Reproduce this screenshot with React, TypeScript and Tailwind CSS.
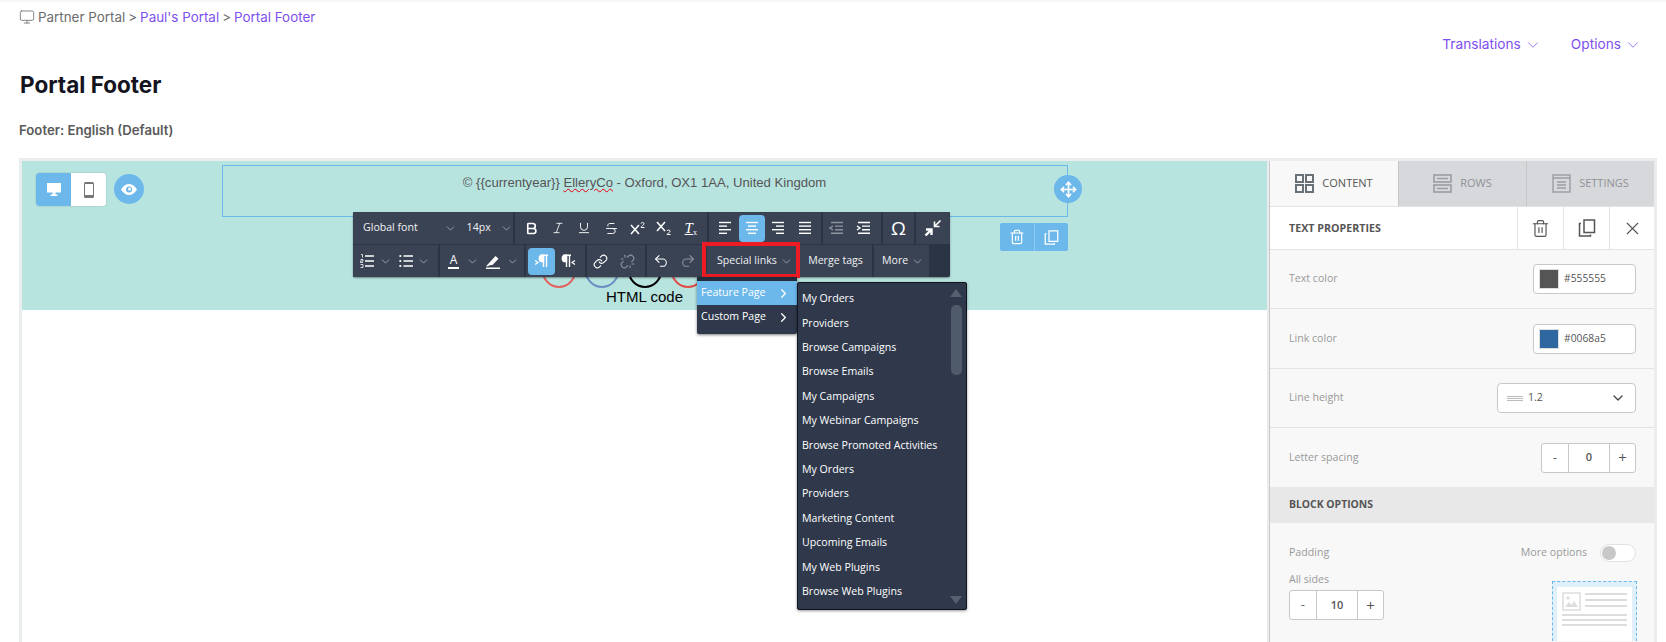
import type { ReactNode } from 'react'
import {
  Bold, ChevronDown, ChevronRight, Italic, Link, Monitor, Move, Redo2, Strikethrough, Trash2, Underline, Undo2, Unlink, X,
} from 'lucide-react'

const MENU_ITEMS = [
  'My Orders', 'Providers', 'Browse Campaigns', 'Browse Emails', 'My Campaigns', 'My Webinar Campaigns',
  'Browse Promoted Activities', 'My Orders', 'Providers', 'Marketing Content', 'Upcoming Emails',
  'My Web Plugins', 'Browse Web Plugins',
]

function Group({ children, className = '' }: { children: ReactNode; className?: string }) {
  return <div className={`flex items-center bg-[#3a4353] px-[3px] ${className}`}>{children}</div>
}

function Tool({ children, active, dim }: { children: ReactNode; active?: boolean; dim?: boolean }) {
  return (
    <div className={`flex h-[27px] w-[27px] items-center justify-center rounded-sm ${active ? 'bg-[#6cb8ea]' : ''} ${dim ? 'text-[#8d94a0]' : 'text-white'}`}>
      {children}
    </div>
  )
}

function Caret({ className = '' }: { className?: string }) {
  return <ChevronDown className={`h-[13px] w-[13px] text-[#aab0ba] ${className}`} strokeWidth={1.5} />
}

// lines for the align buttons
function Lines({ rows }: { rows: [number, number][] }) {
  return (
    <svg width="14" height="14" viewBox="0 0 14 14" stroke="currentColor" strokeWidth="1.4">
      {rows.map(([a, b], i) => (
        <line key={i} x1={a} x2={b} y1={1.5 + i * 3.6} y2={1.5 + i * 3.6} />
      ))}
    </svg>
  )
}

function Indent({ out }: { out?: boolean }) {
  return (
    <svg width="15" height="14" viewBox="0 0 15 14" fill="none" stroke="currentColor" strokeWidth="1.4">
      <path d="M2 1.500h12M6 5.100h8M6 8.700h8M2 12.300h12" />
      <path d={out ? 'M4 5L1 7l3 2' : 'M1 5l3 2-3 2'} />
    </svg>
  )
}

function ScriptIcon({ up }: { up?: boolean }) {
  return (
    <svg width="16" height="14" viewBox="0 0 16 14" fill="none" stroke="currentColor">
      <path d={up ? 'M1 4l8 9M9 4l-8 9' : 'M1 1l8 9M9 1l-8 9'} strokeWidth="1.5" />
      <path d={up ? 'M11 2.500c.5-1.500 3.500-1.200 3 .5-.3 1-2.500 2-3 3.500h3.500' : 'M11 10c.5-1.500 3.500-1.200 3 .5-.3 1-2.500 2-3 3h3.500'} strokeWidth="1" />
    </svg>
  )
}

function NumberList() {
  return (
    <svg width="14" height="14" viewBox="0 0 14 14" stroke="currentColor" fill="currentColor">
      <path d="M5 2h9M5 7h9M5 12h9" strokeWidth="1.6" />
      <path d="M1 .5h1.500v3M.5 5.500h2.500v1.500H.5v1.500h2.500M.5 10.500h2.500v3H.5" strokeWidth=".8" fill="none" />
    </svg>
  )
}

function BulletList() {
  return (
    <svg width="14" height="14" viewBox="0 0 14 14" stroke="currentColor" fill="currentColor">
      <path d="M4.500 2H14M4.500 7H14M4.500 12H14" strokeWidth="1.6" />
      <circle cx="1.300" cy="2" r="1.100" stroke="none" /><circle cx="1.300" cy="7" r="1.100" stroke="none" /><circle cx="1.300" cy="12" r="1.100" stroke="none" />
    </svg>
  )
}

function Marker() {
  return (
    <svg width="16" height="15" viewBox="0 0 16 15" fill="currentColor">
      <path d="M4.500 8.500L10.500 2l3 2.700-6 6.300-3 .3-1.500 1H1z" />
      <rect x="1" y="13.500" width="14" height="1.500" />
    </svg>
  )
}

function ParaDir({ rtl }: { rtl?: boolean }) {
  return (
    <svg width="15" height="14" viewBox="0 0 15 14" fill="none" stroke="currentColor" strokeWidth="1.4">
      <g transform={rtl ? 'translate(-4 0)' : ''}>
        <path d="M6 1.200h8M9.500 1.200V13M12.500 1.200V13" />
        <path d="M9.500 1.200H8.500a3.200 3.200 0 0 0 0 6.400h1z" fill="currentColor" />
      </g>
      <path d={rtl ? 'M14 6.500l-3 2 3 2' : 'M1 6.500l3 2-3 2'} strokeWidth="1.200" />
    </svg>
  )
}

function CopyIcon({ size }: { size: number }) {
  return (
    <svg width={size} height={size} viewBox="0 0 18 18" fill="none" stroke="currentColor" strokeWidth="1.500">
      <path d="M6 1h10.500v12.500H6z" />
      <path d="M3.500 4.500h-1.500v12.500h11v-1.500" transform="translate(-.5 0)" />
    </svg>
  )
}

function Social({ className }: { className: string }) {
  return <div className={`h-[34px] w-[34px] rounded-full border-2 ${className}`} />
}

function Stepper({ value }: { value: string }) {
  return (
    <div className="flex h-[30px] w-[95px] rounded-[3px] border border-[#c8c8c8] bg-white text-[#555]">
      <div className="flex w-[27px] items-center justify-center border-r border-[#c8c8c8] text-[12px]">-</div>
      <div className="flex flex-1 items-center justify-center text-[11px] font-semibold">{value}</div>
      <div className="flex w-[26px] items-center justify-center border-l border-[#c8c8c8] text-[15px]">+</div>
    </div>
  )
}

function ColorRow({ label, color, value, height }: { label: string; color: string; value: string; height: string }) {
  return (
    <div className={`flex items-center justify-between border-b border-[#e2e4e4] pl-[19px] pr-[18px] ${height}`}>
      <span className="text-[10.6px] text-[#999]">{label}</span>
      <div className="flex h-[30px] w-[103px] items-center gap-[5px] rounded-[4px] border border-[#c8c8c8] bg-white pl-[5px]">
        <div className="h-[20px] w-[20px] border border-[#ddd]" style={{ backgroundColor: color }} />
        <span className="text-[10.3px] text-[#555]">{value}</span>
      </div>
    </div>
  )
}

function Toolbar() {
  return (
    <div className="absolute left-[331px] top-[51px] z-10 flex h-[65px] w-[597px] flex-col gap-[1px] rounded-[2px] bg-[#2b3444] font-['Open_Sans',sans-serif] text-[10.6px] text-white shadow-[0_1px_2px_rgba(0,0,0,0.4)]">
      <div className="flex h-[32px] gap-[2px]">
        <div className="flex w-[160px] items-center bg-[#3a4353] pl-[10px] text-[#f0f1f3]">
          <span className="w-[82px]">Global font</span>
          <Caret />
          <span className="ml-[10px] w-[27px]">14px</span>
          <Caret className="ml-[7px]" />
        </div>
        <Group className="w-[192px]">
          <Tool><Bold size={15} strokeWidth={2.6} /></Tool>
          <Tool><Italic size={14} strokeWidth={1.4} /></Tool>
          <Tool><Underline size={14} strokeWidth={1.6} /></Tool>
          <Tool><Strikethrough size={15} strokeWidth={1.5} /></Tool>
          <Tool><ScriptIcon up /></Tool>
          <Tool><ScriptIcon /></Tool>
          <Tool>
            <span className="font-['Liberation_Serif',serif] text-[15px] italic leading-none underline">T<sub className="text-[8px] not-italic">x</sub></span>
          </Tool>
        </Group>
        <Group className="w-[112px]">
          <Tool><Lines rows={[[1, 13], [1, 9], [1, 13], [1, 9]]} /></Tool>
          <Tool active><Lines rows={[[1, 13], [3, 11], [1, 13], [3, 11]]} /></Tool>
          <Tool><Lines rows={[[1, 13], [5, 13], [1, 13], [5, 13]]} /></Tool>
          <Tool><Lines rows={[[1, 13], [1, 13], [1, 13], [1, 13]]} /></Tool>
        </Group>
        <Group className="w-[58px] !px-0">
          <Tool dim><Indent out /></Tool>
          <Tool><Indent /></Tool>
        </Group>
        <Group className="w-[31px] justify-center !px-0">
          <span className="text-[19px] leading-none">Ω</span>
        </Group>
        <Group className="flex-1 justify-center !px-0">
          <svg width="18" height="18" viewBox="0 0 18 18" fill="none" stroke="currentColor" strokeWidth="1.600">
            <path d="M16.500 1.500L11 7M10.500 2.500v5h5" />
            <path d="M7 11l-5.500 5.500" strokeWidth="2.400" />
            <path d="M2 10.500h5.500V16" strokeWidth="2.400" />
          </svg>
        </Group>
      </div>
      <div className="flex h-[32px] gap-[2px]">
        <Group className="w-[85px] !px-0">
          <Tool><NumberList /></Tool>
          <Caret className="-ml-[1px]" />
          <Tool><BulletList /></Tool>
          <Caret className="-ml-[2px]" />
        </Group>
        <Group className="w-[84px] !px-0">
          <Tool>
            <span className="border-b-2 border-white px-[2px] text-[12px] font-medium leading-[14px]">A</span>
          </Tool>
          <Caret className="-ml-[1px]" />
          <Tool><Marker /></Tool>
          <Caret />
        </Group>
        <Group className="w-[59px] !px-[2px]">
          <Tool active><ParaDir /></Tool>
          <Tool><ParaDir rtl /></Tool>
        </Group>
        <Group className="w-[58px] !px-0">
          <Tool><Link size={15} strokeWidth={1.8} /></Tool>
          <Tool dim><Unlink size={15} strokeWidth={1.8} /></Tool>
        </Group>
        <Group className="w-[58px] !px-0">
          <Tool><Undo2 size={16} strokeWidth={1.6} /></Tool>
          <Tool dim><Redo2 size={16} strokeWidth={1.6} /></Tool>
        </Group>
        <div className="flex w-[90px] items-center gap-[3px] bg-[#3a4353] pl-[10px] text-[#f0f1f3]">
          Special links <Caret />
        </div>
        <div className="flex w-[73px] items-center justify-center bg-[#3a4353] text-[#f0f1f3]">Merge tags</div>
        <div className="flex w-[55px] items-center gap-[3px] bg-[#3a4353] pl-[8px] text-[#f0f1f3]">
          More <Caret />
        </div>
      </div>
      {/* highlight drawn on top of the screenshot */}
      <div className="absolute left-[349px] top-[30px] h-[36px] w-[98px] border-[4px] border-[#ed1c24]" />
    </div>
  )
}

function Menus() {
  return (
    <div className="font-['Open_Sans',sans-serif] text-[10.6px] text-white">
      <div className="absolute left-[675px] top-[116px] z-20 h-[57px] w-[100px] rounded-b-[2px] border-t-[4px] border-[#222b3a] bg-[#2f394b] shadow-[0_1px_3px_rgba(0,0,0,0.5)]">
        <div className="flex h-[24px] items-center justify-between bg-[#6cb8ea] pl-[4px] pr-[6px]">
          Feature Page <ChevronRight size={15} strokeWidth={2} />
        </div>
        <div className="flex h-[24px] items-center justify-between pl-[4px] pr-[6px]">
          Custom Page <ChevronRight size={15} strokeWidth={2} />
        </div>
      </div>
      <div className="absolute left-[775px] top-[121px] z-20 flex h-[328px] w-[170px] rounded-[2px] border border-[#11151d] bg-[#2f394b] shadow-[0_1px_3px_rgba(0,0,0,0.4)]">
        <div className="flex-1 pl-[4px] pt-[4px]">
          {MENU_ITEMS.map((item, i) => (
            <div key={i} className="flex h-[24.4px] items-center">{item}</div>
          ))}
        </div>
        <div className="relative w-[16px]">
          <div className="absolute left-[0px] top-[6px] h-0 w-0 border-x-[6px] border-b-[8px] border-x-transparent border-b-[#566071]" />
          <div className="absolute left-[1px] top-[22px] h-[70px] w-[11px] rounded-[5px] bg-[#4f5a6b]" />
          <div className="absolute bottom-[5px] left-[0px] h-0 w-0 border-x-[6px] border-t-[8px] border-x-transparent border-t-[#566071]" />
        </div>
      </div>
    </div>
  )
}

function Canvas() {
  return (
    <div className="relative flex h-[149px] flex-col items-center bg-[#b8e4e0] pt-[4px] font-['Liberation_Sans',sans-serif]">
      <div className="h-[52px] w-[846px] border border-[#6cb8ea] pt-[8px] text-center text-[13.1px] leading-[18px] text-[#555]">
        © {'{{currentyear}}'} <span className="underline decoration-red-600 decoration-wavy decoration-1">ElleryCo</span> - Oxford, OX1 1AA, United Kingdom
      </div>
      <div className="mr-[42px] mt-[37px] flex gap-[9px]">
        <Social className="border-[#e0655f]" />
        <Social className="border-[#6c8fc4]" />
        <Social className="border-black" />
        <Social className="border-[#e0504a]" />
      </div>
      <div className="text-[15px] leading-[18px] text-black">HTML code</div>

      <div className="absolute left-[14px] top-[12px] flex h-[33px] w-[70px] overflow-hidden rounded-[3px] bg-white shadow-[0_0_2px_rgba(0,0,0,0.2)]">
        <div className="flex w-[35px] items-center justify-center bg-[#6cb8ea]">
          <svg width="14" height="13" viewBox="0 0 14 13" fill="#fff"><path d="M0 0h14v9.500H0zM5.500 9.500h3v2h2V13h-7v-1.500h2z" /></svg>
        </div>
        <div className="flex flex-1 items-center justify-center">
          <svg width="10" height="16" viewBox="0 0 10 16"><rect width="10" height="16" rx="1.500" fill="#777" /><rect x="1" y="2" width="8" height="11" fill="#fff" /></svg>
        </div>
      </div>
      <div className="absolute left-[92px] top-[13px] flex h-[30px] w-[30px] items-center justify-center rounded-full bg-[#6cb8ea]">
        <svg width="16" height="11" viewBox="0 0 16 11"><path d="M0 5.500C2 2 5 0 8 0s6 2 8 5.500C14 9 11 11 8 11S2 9 0 5.500z" fill="#fff" /><circle cx="8" cy="5.500" r="3" fill="#6cb8ea" /><circle cx="8.500" cy="5" r="1.500" fill="#fff" /></svg>
      </div>
      <div className="absolute left-[1032px] top-[14px] z-10 flex h-[28px] w-[28px] items-center justify-center rounded-full bg-[#6cb8ea] text-white">
        <Move size={17} strokeWidth={2.4} />
      </div>
      <div className="absolute left-[978px] top-[62px] flex h-[28px] w-[68px] rounded-[2px] bg-[#6cb8ea] text-white">
        <div className="flex flex-1 items-center justify-center"><Trash2 size={16} strokeWidth={1.8} /></div>
        <div className="flex flex-1 items-center justify-center border-l border-[#8fc9ef]"><CopyIcon size={15} /></div>
      </div>

      <Toolbar />
      <Menus />
    </div>
  )
}

function SidePanel() {
  return (
    <div className="h-full w-[385px] shrink-0 border-l border-[#c8c8c8] bg-[#f8f8f8] font-['Open_Sans',sans-serif]">
      <div className="flex h-[46px] border-b border-[#e2e4e4] text-[11px]">
        <div className="flex w-[128px] items-center justify-center gap-[8px] text-[#555]">
          <svg width="19" height="19" viewBox="0 0 19 19" fill="none" stroke="#6a7278" strokeWidth="2">
            <rect x="1" y="1" width="7" height="7" /><rect x="11" y="1" width="7" height="7" />
            <rect x="1" y="11" width="7" height="7" /><rect x="11" y="11" width="7" height="7" />
          </svg>
          CONTENT
        </div>
        <div className="flex w-[128px] items-center justify-center gap-[8px] border-l border-[#c4c6c8] bg-[#d6d8db] text-[#8e9296]">
          <svg width="19" height="19" viewBox="0 0 19 19" fill="none" stroke="#9a9da1" strokeWidth="1.6">
            <rect x="1" y="1" width="17" height="7" /><rect x="1" y="11" width="17" height="7" />
            <path d="M4 4.500h11M4 14.500h11" />
          </svg>
          ROWS
        </div>
        <div className="flex flex-1 items-center justify-center gap-[8px] border-l border-[#c4c6c8] bg-[#d6d8db] text-[#8e9296]">
          <svg width="19" height="19" viewBox="0 0 19 19" fill="none" stroke="#9a9da1" strokeWidth="1.4">
            <rect x="1" y="1" width="17" height="17" /><path d="M1 4h17M5 8h9M5 11h9M5 14h9" />
          </svg>
          SETTINGS
        </div>
      </div>
      <div className="flex h-[43px] items-center border-b border-[#e2e4e4] bg-white pl-[19px] text-[#555]">
        <span className="flex-1 text-[10.7px] font-bold">TEXT PROPERTIES</span>
        <div className="flex h-full w-[46px] items-center justify-center border-l border-[#e2e4e4]"><Trash2 size={19} strokeWidth={1.5} /></div>
        <div className="flex h-full w-[46px] items-center justify-center border-l border-[#e2e4e4]"><CopyIcon size={18} /></div>
        <div className="flex h-full w-[45px] items-center justify-center border-l border-[#e2e4e4]"><X size={21} strokeWidth={1.3} /></div>
      </div>
      <ColorRow label="Text color" color="#555555" value="#555555" height="h-[59px]" />
      <ColorRow label="Link color" color="#2f67a0" value="#0068a5" height="h-[60px]" />
      <div className="flex h-[59px] items-center justify-between border-b border-[#e2e4e4] pl-[19px] pr-[18px]">
        <span className="text-[10.6px] text-[#999]">Line height</span>
        <div className="flex h-[30px] w-[139px] items-center rounded-[4px] border border-[#c8c8c8] bg-white pl-[9px] pr-[9px] text-[10.6px] text-[#555]">
          <div className="flex w-[16px] flex-col gap-[1px]">
            <div className="h-[1px] bg-[#bbb]" /><div className="h-[1px] bg-[#bbb]" /><div className="h-[1px] bg-[#bbb]" />
          </div>
          <span className="ml-[5px] flex-1">1.2</span>
          <ChevronDown size={16} strokeWidth={2} className="text-[#444]" />
        </div>
      </div>
      <div className="flex h-[59px] items-center justify-between pl-[19px] pr-[18px]">
        <span className="text-[10.6px] text-[#999]">Letter spacing</span>
        <Stepper value="0" />
      </div>
      <div className="flex h-[36px] items-center bg-[#e8e8e8] pl-[19px] text-[10.4px] font-bold text-[#555]">BLOCK OPTIONS</div>
      <div className="flex justify-between pl-[19px] pr-[18px] pt-[21px]">
        <div>
          <div className="flex h-[18px] items-center text-[10.6px] text-[#999]">Padding</div>
          <div className="mt-[9px] flex h-[18px] items-center text-[10.6px] text-[#999]">All sides</div>
          <div className="mt-[1px]"><Stepper value="10" /></div>
        </div>
        <div className="flex flex-col items-end">
          <div className="flex items-center gap-[13px] text-[10.6px] text-[#999]">
            More options
            <div className="flex h-[18px] w-[36px] items-center rounded-full border border-[#e2e2e2] bg-white pl-[1px]">
              <div className="h-[14px] w-[14px] rounded-full bg-[#c8c8c8]" />
            </div>
          </div>
          <div className="-mr-[1px] mt-[19px] h-[60px] w-[85px] border border-b-0 border-dashed border-[#6cb8ea] bg-[#dff0fa] px-[4px] pt-[5px]">
            <div className="h-full bg-white px-[5px] pt-[5px]">
              <div className="flex gap-[4px]">
                <svg width="19" height="19" viewBox="0 0 19 19" fill="none" stroke="#ddd" strokeWidth="1.500">
                  <rect x="1" y="1" width="17" height="17" />
                  <circle cx="6" cy="6" r="1" fill="#ddd" />
                  <path d="M3 15l4-5 2.500 3 2.500-4 4 6z" fill="#ddd" stroke="none" />
                </svg>
                <div className="flex flex-1 flex-col gap-[4px] pt-[1px]">
                  <div className="h-[2px] bg-[#ddd]" /><div className="h-[2px] bg-[#ddd]" /><div className="h-[2px] bg-[#ddd]" />
                </div>
              </div>
              <div className="mt-[3px] flex flex-col gap-[3px]">
                <div className="h-[2px] bg-[#ddd]" /><div className="h-[2px] bg-[#ddd]" /><div className="h-[2px] bg-[#ddd]" />
              </div>
            </div>
          </div>
        </div>
      </div>
    </div>
  )
}

export default function App() {
  return (
    <div className="flex h-[642px] w-[1666px] flex-col overflow-hidden bg-white font-['Inter',sans-serif]">
      <div className="h-[3px] bg-gradient-to-b from-[#f5f5f5] to-white" />
      <div className="flex h-[28px] items-center gap-[3px] pl-[19px] text-[13.4px] text-[#6b6b6b]">
        <Monitor size={16} strokeWidth={1.2} />
        <span>Partner Portal</span>
        <span>&gt;</span>
        <span className="text-[#7e4ff0]">Paul's Portal</span>
        <span>&gt;</span>
        <span className="text-[#7e4ff0]">Portal Footer</span>
      </div>
      <div className="mt-[3px] flex h-[21px] justify-end gap-[29px] pr-[24px] text-[13.7px] text-[#7e4ff0]">
        <span className="flex items-center gap-[3px]">Translations <ChevronDown size={18} strokeWidth={1} /></span>
        <span className="flex items-center gap-[3px]">Options <ChevronDown size={18} strokeWidth={1} /></span>
      </div>
      <h1 className="mt-[15px] pl-[20px] text-[22.5px] font-bold leading-[30px] text-[#14141f]">Portal Footer</h1>
      <div className="mt-[21px] pl-[19px] text-[13.2px] font-semibold leading-[18px] text-[#5a5a5a]">Footer: English (Default)</div>
      <div className="ml-[19px] mt-[19px] flex h-[484px] w-[1638px] items-start gap-[2px] bg-[#e9eded] p-[3px] pb-0">
        <div className="h-full w-[1246px] bg-white">
          <Canvas />
        </div>
        <SidePanel />
      </div>
    </div>
  )
}
